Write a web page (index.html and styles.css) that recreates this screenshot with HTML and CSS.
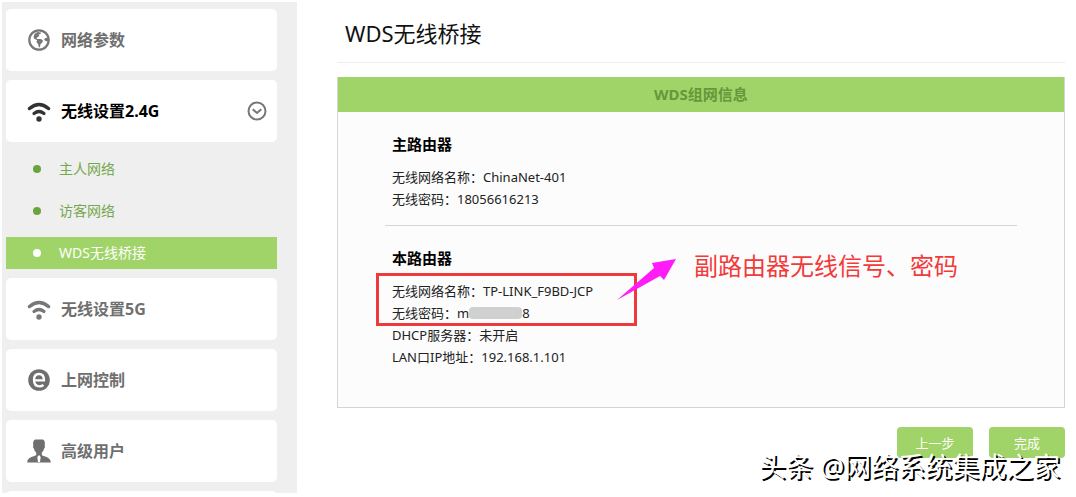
FILE: index.html
```html
<!DOCTYPE html>
<html lang="zh-CN">
<head>
  <meta charset="UTF-8">
  <meta name="viewport" content="width=device-width, initial-scale=1.0">
  <title>WDS无线桥接</title>
  <link rel="stylesheet" href="styles.css">
</head>
<body>
  <div class="page">
    <nav class="sidebar">
      <a class="menu" href="#">
        <svg class="icon" viewBox="0 0 24 24">
          <circle cx="12" cy="12" r="9.7" fill="none" stroke="#777" stroke-width="2.2"/>
          <path fill="#777" d="M7.500 6l3-2 3.500.5-.5 1.500-2 .5 1 1.500-2 1-1 2h4.500l2 1.500-1 2.500-1.500 1-.5 3-1 .5-1-3.500-1.500-2 .5-2-2.500-1-1-2z"/>
          <path fill="#777" d="M21 9.500l-2.500.5-1.500 1.500 1.500 1.500 2.500.5z"/>
        </svg>
        <span>网络参数</span>
      </a>
      <a class="menu open" href="#">
        <svg class="icon" viewBox="0 0 24 24">
          <g fill="none" stroke="#333" stroke-linecap="round">
            <path stroke-width="3.500" d="M2.500 9.500Q12 1.500 21.500 9.500"/>
            <path stroke-width="3.200" d="M7 14.500Q12 10.500 17 14.500"/>
          </g>
          <circle cx="12" cy="20" r="2.700" fill="#333"/>
        </svg>
        <span>无线设置2.4G</span>
        <svg class="toggle" viewBox="0 0 20 20">
          <g fill="none" stroke="#777" stroke-width="2">
            <circle cx="10" cy="10" r="8.500"/>
            <path d="M5.700 8.300l4.300 3.700 4.300-3.700"/>
          </g>
        </svg>
      </a>
      <div class="submenu">
        <a href="#">主人网络</a>
        <a href="#">访客网络</a>
        <a class="active" href="#">WDS无线桥接</a>
      </div>
      <a class="menu" href="#">
        <svg class="icon" viewBox="0 0 24 24">
          <g fill="none" stroke="#777" stroke-linecap="round">
            <path stroke-width="3.500" d="M2.500 9.500Q12 1.500 21.500 9.500"/>
            <path stroke-width="3.200" d="M7 14.500Q12 10.500 17 14.500"/>
          </g>
          <circle cx="12" cy="20" r="2.700" fill="#777"/>
        </svg>
        <span>无线设置5G</span>
      </a>
      <a class="menu" href="#">
        <svg class="icon" viewBox="0 0 24 24">
          <circle cx="12" cy="12" r="10.800" fill="#6f6f6f"/>
          <path fill="none" stroke="#fff" stroke-width="2.300" d="M7 12.300H17Q17 6 12 6Q7 6 7 12Q7 18.300 12.500 18.300Q14.800 18.300 16.500 17"/>
        </svg>
        <span>上网控制</span>
      </a>
      <a class="menu" href="#">
        <svg class="icon" viewBox="0 0 24 24">
          <path fill="#6f6f6f" d="M8 .5h8c1.800 1 2.200 3 1.700 6 .6.800.2 2.500-.6 3-.4 2-1.300 3.200-2.300 4v2.500c1 1.500 9 1.500 9 7.500H.2c0-6 8-6 9-7.500v-2.500c-1-.8-1.900-2-2.300-4-.8-.5-1.200-2.200-.6-3C5.800 3.500 6.200 1.500 8 .5z"/>
          <path fill="#fff" d="M12 16l1.700 2-.7 5h-2l-.7-5z"/>
        </svg>
        <span>高级用户</span>
      </a>
      <a class="menu" href="#"></a>
    </nav>

    <main class="content">
      <h1>WDS无线桥接</h1>
      <section class="panel">
        <h2>WDS组网信息</h2>
        <div class="router">
          <h3>主路由器</h3>
          <p>无线网络名称：ChinaNet-401</p>
          <p>无线密码：18056616213</p>
        </div>
        <div class="router">
          <h3>本路由器</h3>
          <div class="marked">
            <p>无线网络名称：TP-LINK_F9BD-JCP</p>
            <p>无线密码：m<span class="masked"></span>8</p>
            <svg class="arrow" viewBox="0 0 60 42">
              <path fill="#ff1cf7" d="M0 41L37 9 35 4 59 0 47 21 43 17z"/>
            </svg>
            <span class="note">副路由器无线信号、密码</span>
          </div>
          <p>DHCP服务器：未开启</p>
          <p>LAN口IP地址：192.168.1.101</p>
        </div>
      </section>
      <div class="buttons">
        <button>上一步</button>
        <button>完成</button>
      </div>
    </main>
  </div>
  <div class="watermark">头条 @网络系统集成之家</div>
</body>
</html>
```
FILE: styles.css
```css
*, *::before { box-sizing: border-box; }
body { margin: 0; background: #fff; color: #222; font: 13px/22px "Noto Sans", "Noto Sans CJK SC", sans-serif; }
h1, h2, h3, p { margin: 0; }
a { text-decoration: none; }

.page { display: flex; gap: 40px; height: 100vh; padding: 2px 11px 4px 2px; overflow: hidden; }

.sidebar { flex: 0 0 295px; display: flex; flex-direction: column; gap: 9px; padding: 7px 20px 0 4px; background: #efefef; overflow: hidden; }
.menu { flex: none; display: flex; align-items: center; gap: 10px; height: 62px; padding: 0 10px 0 21px; border-radius: 5px; background: #fff; color: #6f6f6f; font-size: 16px; font-weight: bold; }
.menu.open { color: #000; }
.icon { width: 24px; height: 24px; }
.toggle { width: 20px; height: 20px; margin-left: auto; }

.submenu { display: flex; flex-direction: column; gap: 10px; padding-top: 2px; }
.submenu a { display: flex; align-items: center; gap: 18px; height: 32px; padding-left: 27px; color: #74a84e; font-size: 14px; }
.submenu a::before { content: ""; width: 8px; height: 8px; border-radius: 50%; background: #6ba43f; }
.submenu a.active { background: #a0d468; color: #fff; }
.submenu a.active::before { background: #fff; }

.content { flex: 1; min-width: 0; }
h1 { height: 61px; padding: 15px 8px 0; border-bottom: 1px solid #eee; font-size: 22px; line-height: 32px; font-weight: normal; color: #111; }
.panel { margin-top: 14px; padding-bottom: 39px; border: 1px solid #d5d5d5; border-top: 0; background: #fcfcfc; }
h2 { height: 35px; background: #a0d468; color: #68963b; font-size: 15px; line-height: 35px; text-align: center; }
.router { margin: 0 47px; padding: 21px 7px 0; }
.router + .router { margin-top: 15px; border-top: 1px solid #d5d5d5; }
h3 { margin-bottom: 11px; color: #000; font-size: 15px; line-height: 22px; }

.marked { position: relative; }
.marked::before { content: ""; position: absolute; left: -16px; top: -7px; width: 261px; height: 53px; border: 3px solid #ee3a3a; }
.masked { display: inline-block; width: 53px; height: 12px; border-radius: 4px; background: #d0d0d0; vertical-align: -1px; }
.arrow { position: absolute; left: 225px; top: -21px; width: 60px; height: 42px; }
.note { position: absolute; left: 302px; top: -30px; color: #f23a3a; font-size: 24px; line-height: 32px; white-space: nowrap; }

.buttons { display: flex; justify-content: flex-end; gap: 16px; margin-top: 19px; }
.buttons button { width: 76px; height: 31px; padding: 0; border: 0; border-radius: 4px; background: #a0d468; color: #fff; font: inherit; }

.watermark { position: absolute; right: 16px; bottom: 11px; color: #fff; font-size: 27px; line-height: 38px; text-shadow: 2px 2px 0 #000; }
```
